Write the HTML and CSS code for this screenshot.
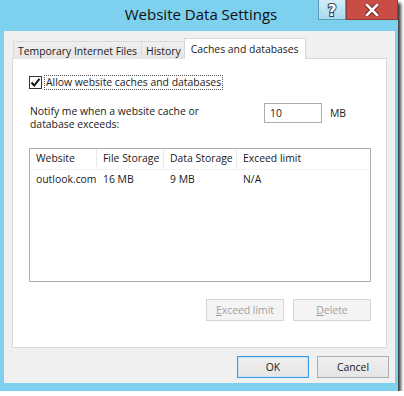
FILE: index.html
```html
<!DOCTYPE html>
<html lang="en">
<head>
    <meta charset="UTF-8">
    <title>Website Data Settings</title>
    <link rel="stylesheet" href="styles.css">
</head>
<body>
    <div class="window">
        <div class="titlebar">
            <div></div>
            <div class="title">Website Data Settings</div>
            <div class="controls">
                <div class="ctl help">
                    <svg width="14" height="18" viewBox="0 0 14 18">
                        <text x="7" y="15" text-anchor="middle" class="help-glyph">?</text>
                    </svg>
                </div>
                <div class="ctl close">
                    <svg width="14" height="12" viewBox="0 0 14 12">
                        <path d="M2 1 L12 11 M12 1 L2 11" stroke="#6b2420" stroke-width="4.5" stroke-linecap="square"/>
                        <path d="M2 1 L12 11 M12 1 L2 11" stroke="#fff" stroke-width="2.6" stroke-linecap="square"/>
                    </svg>
                </div>
            </div>
        </div>

        <div class="client">
            <!-- Tabs -->
            <div class="tabs">
                <div class="tab">Temporary Internet Files</div>
                <div class="tab">History</div>
                <div class="tab active">Caches and databases</div>
            </div>

            <div class="panel">
                <div class="check-row">
                    <span class="checkbox">
                        <svg width="11" height="11" viewBox="0 0 11 11">
                            <path d="M1.5 5.5 L4.2 8.5 L9.5 1.8" fill="none" stroke="#111" stroke-width="2"/>
                        </svg>
                    </span>
                    <span class="focus">Allow website caches and databases</span>
                </div>

                <div class="notify-row">
                    <div class="notify-text">Notify me when a website cache or<br>database exceeds:</div>
                    <div class="textbox">10</div>
                    <div class="unit">MB</div>
                </div>

                <div class="list">
                    <div class="list-head">
                        <div class="col c1">Website</div>
                        <div class="col c2">File Storage</div>
                        <div class="col c3">Data Storage</div>
                        <div class="col c4">Exceed limit</div>
                    </div>
                    <div class="list-row">
                        <div class="col c1">outlook.com</div>
                        <div class="col c2">16 MB</div>
                        <div class="col c3">9 MB</div>
                        <div class="col c4">N/A</div>
                    </div>
                </div>

                <div class="panel-buttons">
                    <div class="btn disabled"><u>E</u>xceed limit</div>
                    <div class="btn disabled"><u>D</u>elete</div>
                </div>
            </div>

            <div class="dialog-buttons">
                <div class="btn default">OK</div>
                <div class="btn">Cancel</div>
            </div>
        </div>
    </div>
</body>
</html>
```

FILE: styles.css
```css
body {
    margin: 0;
    background-color: #fff;
    font-family: "Open Sans", "Noto Sans", sans-serif;
    font-size: 10.4px;
    color: #1a1a1a;
}

.window {
    width: 398px;
    height: 391px;
    box-sizing: border-box;
    background-color: #7dd0ee;
    padding: 0 3px 8px 4px;
    display: flex;
    flex-direction: column;
    box-shadow: 3px 3px 3px rgba(0, 0, 0, 0.75);
}

/* Title bar */
.titlebar {
    height: 31px;
    display: grid;
    grid-template-columns: 1fr auto 1fr;
    margin-right: -3px;
}

.title {
    font-size: 15px;
    color: #111;
    padding-top: 4px;
}

.controls {
    display: flex;
    justify-content: flex-end;
    align-items: flex-start;
}

.ctl {
    height: 20px;
    display: flex;
    align-items: center;
    justify-content: center;
    box-sizing: border-box;
}

.help {
    width: 28px;
    background: linear-gradient(#d2edf7, #a6dbef);
    border: 1px solid #5f9db6;
    border-top: none;
}

.help-glyph {
    font-family: "DejaVu Sans", sans-serif;
    font-weight: bold;
    font-size: 15px;
    fill: #fff;
    stroke: #3a3f48;
    stroke-width: 2px;
    paint-order: stroke;
}

.close {
    width: 52px;
    background-color: #c94c45;
    border: 1px solid #8f3a35;
    border-top: none;
}

/* Client area */
.client {
    flex: 1;
    background-color: #f0f0f0;
    padding: 7px 6px 0 8px;
    display: flex;
    flex-direction: column;
}

.tabs {
    display: flex;
    align-items: flex-end;
    height: 21px;
    padding-left: 1px;
    margin-right: 2px;
    margin-bottom: -1px;
    position: relative;
    z-index: 1;
}

.tab {
    height: 18px;
    box-sizing: border-box;
    padding: 1px 4px 0 4px;
    border: 1px solid #d9d9d9;
    border-bottom: none;
    background: linear-gradient(#f0f0f0, #e5e5e5);
    margin-right: -1px;
    line-height: 16px;
    white-space: nowrap;
}

.tab.active {
    height: 21px;
    background: #fff;
    padding: 2px 6px 0 6px;
    margin-left: -1px;
    line-height: 17px;
}

.panel {
    height: 290px;
    box-sizing: border-box;
    background-color: #fff;
    border: 1px solid #d9d9d9;
    margin-right: 2px;
    padding: 16px 15px 0 16px;
    display: flex;
    flex-direction: column;
}

.check-row {
    display: flex;
    align-items: center;
    gap: 2px;
}

.checkbox {
    width: 13px;
    height: 13px;
    box-sizing: border-box;
    border: 1px solid #333;
    background-color: #fff;
    display: flex;
    align-items: center;
    justify-content: center;
}

.focus {
    border: 1px dotted #555;
    padding: 0 1px;
    line-height: 13px;
}

.notify-row {
    display: flex;
    align-items: flex-start;
    margin-top: 13px;
    padding-left: 1px;
}

.notify-text {
    width: 234px;
    line-height: 13px;
    padding-top: 2px;
}

.textbox {
    width: 58px;
    height: 20px;
    box-sizing: border-box;
    border: 1px solid #abadb3;
    padding-left: 5px;
    line-height: 18px;
}

.unit {
    margin-left: 8px;
    line-height: 20px;
}

.list {
    height: 134px;
    box-sizing: border-box;
    margin-top: 17px;
    border: 1px solid #adadad;
}

.list-head,
.list-row {
    display: flex;
}

.list-head {
    height: 20px;
    line-height: 19px;
    border-bottom: 1px solid #f2f2f2;
}

.list-row {
    line-height: 16px;
    padding-top: 1px;
}

.col {
    box-sizing: border-box;
    padding-left: 6px;
    white-space: nowrap;
}

.list-head .col {
    border-right: 1px solid #eaeaea;
}

.c1 { width: 67px; }
.c2 { width: 67px; }
.c3 { width: 73px; }
.c4 { flex: 1; border-right: none !important; }

.panel-buttons {
    display: flex;
    justify-content: flex-end;
    gap: 9px;
    margin-top: 17px;
}

.btn {
    width: 78px;
    height: 22px;
    box-sizing: border-box;
    border: 1px solid #acacac;
    background: linear-gradient(#f0f0f0, #e5e5e5);
    display: flex;
    align-items: center;
    justify-content: center;
}

.btn.disabled {
    color: #a0a0a0;
    border-color: #d5d5d5;
    background: #f4f4f4;
}

.btn u {
    text-decoration-color: #a0a0a0;
}

.dialog-buttons {
    display: flex;
    justify-content: flex-end;
    gap: 8px;
    margin-top: 8px;
}

.dialog-buttons .btn {
    width: 72px;
}

.btn.default {
    border-color: #3c9ae3;
    box-shadow: inset 0 0 0 1px #c7e4f7;
}
```
